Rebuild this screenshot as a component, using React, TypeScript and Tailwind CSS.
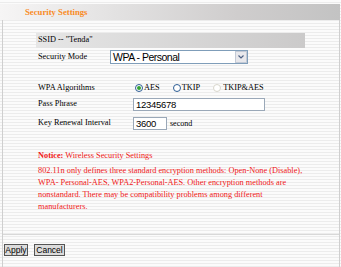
import React from "react";

function Radio({ checked, disabled }: { checked?: boolean; disabled?: boolean }) {
  return (
    <span
      className={
        "inline-flex items-center justify-center w-[8px] h-[8px] rounded-full border bg-white " +
        (disabled ? "border-[#d8d6cc]" : "border-[#2b5c94]")
      }
    >
      {checked ? <span className="w-[4px] h-[4px] rounded-full bg-[#35a235]" /> : null}
    </span>
  );
}

export default function App() {
  return (
    <div className="w-[341px] h-[267px] overflow-hidden bg-[image:repeating-linear-gradient(to_bottom,#fbfbfb_0px,#fbfbfb_2px,#ececec_2px,#ececec_3px)] font-['Liberation_Serif',serif] text-[8.3px] leading-none text-black">
      <div className="h-[4px]" />
      <div className="h-[16px] w-[340px] flex items-center pl-[25px] bg-[linear-gradient(to_right,#f6f5f5_0%,#e2e1e1_35%,#cfcdcd_70%,#c3c3c3_100%)] text-[#f98a1f] font-bold text-[8.7px]">
        Security Settings
      </div>
      <div className="ml-[2px] w-[338px] h-[247px] border-l border-r border-[#cfcfcf] flex flex-col">
        <div className="pl-[33px] flex flex-col">
          <div className="mt-[13px] h-[15px] w-[269px] flex items-center pl-[2px] bg-[linear-gradient(to_right,#e6e6e6,#cbcaca)]">
            SSID -- "Tenda"
          </div>
          <div className="mt-[2px] h-[14px] flex items-center">
            <span className="w-[74px] pl-[2px]">Security Mode</span>
            <div className="w-[138px] h-[14px] border border-[#7f9db9] bg-white flex items-center justify-between">
              <span className="pl-[2px] font-['Liberation_Sans',sans-serif] text-[10.5px] tracking-[-0.5px]">WPA - Personal</span>
              <span className="w-[12px] h-[12px] bg-[#e8e8ec] border border-[#c3cad6] flex items-center justify-center">
                <svg width="6" height="4" viewBox="0 0 6 4">
                  <path d="M0.5 0.5 L3 3 L5.5 0.5" stroke="#4d6185" strokeWidth="1.2" fill="none" />
                </svg>
              </span>
            </div>
          </div>
          <div className="mt-[18px] h-[13px] flex items-center">
            <span className="w-[98px] pl-[2px]">WPA Algorithms</span>
            <span className="flex items-center ml-[1px]">
              <Radio checked />
              <span className="ml-[1px]">AES</span>
            </span>
            <span className="flex items-center ml-[13px]">
              <Radio />
              <span className="ml-[1px]">TKIP</span>
            </span>
            <span className="flex items-center ml-[13px]">
              <Radio disabled />
              <span className="ml-[2px]">TKIP&amp;AES</span>
            </span>
          </div>
          <div className="mt-[3px] h-[13px] flex items-center">
            <span className="w-[97px] pl-[2px]">Pass Phrase</span>
            <div className="w-[132px] h-[13px] border border-[#9aa8b8] bg-white flex items-center pl-[2px] font-['Liberation_Sans',sans-serif] text-[9.5px] tracking-[-0.3px]">
              12345678
            </div>
          </div>
          <div className="mt-[6px] h-[13px] flex items-center">
            <span className="w-[97px] pl-[2px]">Key Renewal Interval</span>
            <div className="w-[34px] h-[13px] border border-[#9aa8b8] bg-white flex items-center pl-[2px] font-['Liberation_Sans',sans-serif] text-[9.5px] tracking-[-0.3px]">
              3600
            </div>
            <span className="ml-[3px] text-[8px]">second</span>
          </div>
          <div className="mt-[20px] pl-[2px] text-[#f01818] text-[8.3px] leading-[12px]">
            <div className="h-[12px]">
              <span className="font-bold">Notice:</span> Wireless Security Settings
            </div>
            <div className="mt-[3px]">802.11n only defines three standard encryption methods: Open-None (Disable),</div>
            <div>WPA- Personal-AES, WPA2-Personal-AES. Other encryption methods are</div>
            <div>nonstandard. There may be compatibility problems among different</div>
            <div>manufacturers.</div>
          </div>
        </div>
        <div className="mt-[21px] h-[1px] bg-[#d8d8d8]" />
        <div className="mt-[9px] ml-[1px] flex items-center gap-[6px] font-['Liberation_Sans',sans-serif] text-[8.5px]">
          <button className="w-[24px] h-[12px] bg-[#dcdcdc] border border-[#555] flex items-center justify-center leading-none">
            Apply
          </button>
          <button className="w-[31px] h-[12px] bg-[#dcdcdc] border border-[#555] flex items-center justify-center leading-none">
            Cancel
          </button>
        </div>
      </div>
    </div>
  );
}
